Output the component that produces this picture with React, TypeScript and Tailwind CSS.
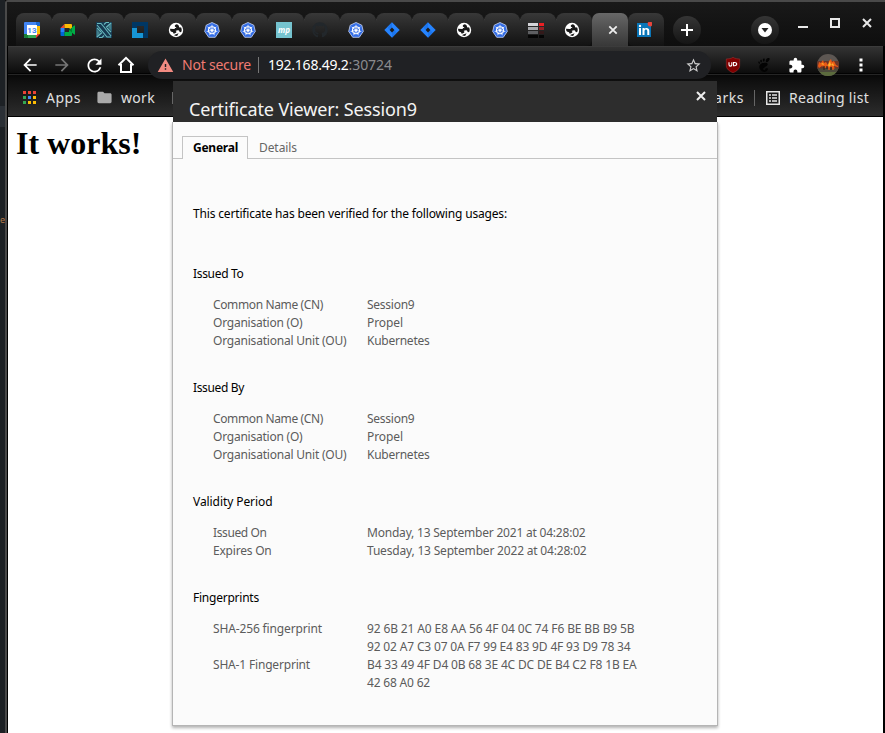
import { useLayoutEffect, useRef, type ReactNode } from "react";
import { MdArrowBack, MdArrowForward, MdClose, MdExtension, MdFolder, MdRefresh, MdStarBorder, MdWarning } from "react-icons/md";
import { FaGithub } from "react-icons/fa";
import { SiGnome } from "react-icons/si";

/** Tracks a single line of text so that it occupies `width` pixels. */
function Fit({ width, className = "", children }: { width: number; className?: string; children: string }) {
  const ref = useRef<HTMLSpanElement>(null);
  useLayoutEffect(() => {
    const el = ref.current;
    if (!el) return;
    el.style.letterSpacing = "0px";
    const natural = el.getBoundingClientRect().width;
    el.style.letterSpacing = `${(width - natural) / children.length}px`;
  }, [width, children]);
  return (
    <span ref={ref} className={`inline-block whitespace-nowrap ${className}`}>
      {children}
    </span>
  );
}

function CalendarIcon() {
  return (
    <svg width="16" height="16" viewBox="0 0 16 16">
      <path d="M0 1q0-1 1-1h11v16H1q-1 0-1-1z" fill="#4285f4" />
      <path d="M12 0h3q1 0 1 1v3h-4z" fill="#1967d2" />
      <path d="M12 4h4v8h-4z" fill="#fbbc04" />
      <path d="M4 12h8v4H4z" fill="#34a853" />
      <path d="M0 12h4v4H1q-1 0-1-1z" fill="#188038" />
      <path d="M12 12h4l-4 4z" fill="#ea4335" />
      <path d="M3 3h10v10H3z" fill="#fff" />
      <text x="7.900" y="11" textAnchor="middle" fontSize="8" fontWeight="700" fontFamily="Roboto, sans-serif" fill="#4285f4">13</text>
    </svg>
  );
}

function MeetIcon() {
  return (
    <svg width="16" height="16" viewBox="0 0 16 16">
      <path d="M.5 6l4-4v4z" fill="#ea4335" />
      <path d="M4.500 2H11q1 0 1 1v5l-3-2H4.500z" fill="#fbbc04" />
      <path d="M.5 6h4v4h-4z" fill="#2684fc" />
      <path d="M.5 10h4v4h-3q-1 0-1-1z" fill="#0066da" />
      <path d="M4.500 10H9V8h3v5q0 1-1 1H4.500z" fill="#00ac47" />
      <path d="M9 8l5-4.200q1-.8 1 .4v7.600q0 1.200-1 .4z" fill="#00832d" />
      <path d="M12 5.500l2-1.700q1-.8 1 .4v7.600q0 1.200-1 .4l-2-1.700z" fill="#00ac47" />
    </svg>
  );
}

function NIcon() {
  return (
    <svg width="16" height="16" viewBox="0 0 16 16">
      <rect width="16" height="16" fill="#173a52" />
      <path d="M.5 15.500V7l3.500 4zM15.500.500V9L12 5z" fill="#68b9bd" opacity=".55" />
      <path d="M1 1.500h4l3 3.500 7 9M1 3l10 12h4M1 6l4 4M11 6l4 4" fill="none" stroke="#68b9bd" strokeWidth="1.100" />
      <path d="M1 15l5-4.500M15 1l-5 4.500M3 15.500h3l2-2M10 .5h3M8 2.500l2-2" fill="none" stroke="#68b9bd" strokeWidth="1.100" />
    </svg>
  );
}

function LinuxFoundationIcon() {
  return (
    <svg width="16" height="16" viewBox="0 0 16 16">
      <path d="M0 0h16v16h-5v-5h1V4H5v5H0z" fill="#003764" />
      <path d="M0 6h5v5h6v5H0z" fill="#1795d4" />
      <path d="M0 0h5v6H0z" fill="#003764" />
    </svg>
  );
}

function GlobeIcon() {
  return (
    <svg width="16" height="16" viewBox="0 0 16 16">
      <circle cx="8" cy="8" r="7.200" fill="#fff" />
      <path d="M9 2.300c-1.500.2-2.400 1-2.200 2 .2.900 1.300.7 1.500 1.500.2.900-1.200 1.100-2.500 1.100l-3.700-.1c-.2 2.500 1 3 2.200 3.200 1.200.3 1 1.500 1.600 1.700l2-.9c.9-.4.500-1.500-.4-1.800 1-.5 2.300-1 3.300-.6 1 .4.300 1.700 1.400 1.900l1.200-.5c.5-1.500.5-3-.4-4.600-1.200.8-1.900.2-2-.8-.1-1-.8-1.200-2-2.100z" fill="#181818" />
      <path d="M6.300 13.600c.4-1.200 1.400-1.300 2.500-1.500l1.800-.9-1.500 2.700z" fill="#181818" />
    </svg>
  );
}

function KubernetesIcon() {
  return (
    <svg width="16" height="16" viewBox="0 0 16 16">
      <path d="M8 .5l5.800 2.700 1.500 6.200-4 5.900H4.700l-4-5.900 1.500-6.200z" fill="#326ce5" stroke="#cbd8f8" strokeWidth=".8" strokeLinejoin="round" />
      <circle cx="8" cy="8.300" r="3.500" fill="none" stroke="#fff" strokeWidth="1.100" />
      <path d="M8 8.300V2.800M8 8.300L3.700 4.900M8 8.300l4.300-3.400M8 8.300l-5.300 1.200M8 8.300l5.300 1.200M8 8.300l-2.400 4.900M8 8.300l2.400 4.900" stroke="#fff" strokeWidth=".8" />
      <circle cx="8" cy="8.300" r="1" fill="#fff" />
    </svg>
  );
}

function JiraIcon() {
  return (
    <svg width="16" height="16" viewBox="0 0 16 16">
      <path d="M8 .3L15.700 8 8 15.700.3 8z" fill="#2684ff" />
      <path d="M8 .3v5.300L5.600 8 3.500 5.500zM8 15.700v-5.300L10.400 8l2.100 2.500z" fill="#1268e0" opacity=".5" />
      <path d="M8 5.600L10.400 8 8 10.400 5.600 8z" fill="#1c1c1c" />
    </svg>
  );
}

function MpIcon() {
  return (
    <svg width="16" height="16" viewBox="0 0 16 16">
      <rect width="16" height="16" fill="#75c3cf" />
      <text x="8" y="10.500" textAnchor="middle" fontSize="8" fontWeight="700" fontStyle="italic" fontFamily="Open Sans, sans-serif" fill="#fff">mp</text>
    </svg>
  );
}

function StripesIcon() {
  return (
    <svg width="16" height="16" viewBox="0 0 16 16">
      <path d="M0 1h10v3H0z" fill="#d4d4d8" />
      <path d="M11 1h5v3h-5z" fill="#ed2024" />
      <path d="M0 5h10v3H0z" fill="#a8a9ad" />
      <path d="M11 5h5v3h-5z" fill="#982024" />
      <path d="M0 9h10v3H0z" fill="#5e5f62" />
      <path d="M11 9h5v3h-5z" fill="#33191a" />
      <path d="M0 13h10v3H0zM11 13h5v3h-5z" fill="#050505" />
    </svg>
  );
}

function LinkedInIcon() {
  return (
    <svg width="16" height="16" viewBox="0 0 16 16">
      <rect x="1" y="1" width="14" height="14" fill="#0a76b8" />
      <path d="M3 6h2v7H3zM6.500 6h2v1c1-1.600 4.800-1.700 4.800 1.700V13h-2V9.200c0-2.200-2.800-2-2.800 0V13h-2z" fill="#fff" />
      <circle cx="4" cy="3.900" r="1.200" fill="#fff" />
      <circle cx="14" cy="2" r="2.400" fill="#e8453c" />
    </svg>
  );
}

function HomeIcon() {
  return (
    <svg width="18" height="18" viewBox="0 0 18 18">
      <path d="M1.500 9.200L9 1.800l7.500 7.400M4 8v8h10V8" fill="none" stroke="#fff" strokeWidth="2" />
    </svg>
  );
}

function ShieldIcon() {
  return (
    <svg width="16" height="16" viewBox="0 0 16 16">
      <path d="M8 .3c2 1.300 4.200 1.600 6.700 1.600v6.500c0 3.500-3 5.800-6.700 7.400-3.700-1.600-6.700-3.900-6.700-7.400V1.900C3.800 1.900 6 1.600 8 .3z" fill="#800000" stroke="#a44" strokeWidth=".4" />
      <path d="M4 5.300v2.500q0 1.300 1.400 1.300T6.800 7.800V5.300" fill="none" stroke="#fff" strokeWidth="1.100" />
      <path d="M8.500 5.500h1q2.200 0 2.200 1.600T9.500 8.700h-1z" fill="none" stroke="#fff" strokeWidth="1.100" />
    </svg>
  );
}

function AvatarIcon() {
  return (
    <svg width="22" height="22" viewBox="0 0 22 22">
      <defs>
        <clipPath id="avatar"><circle cx="11" cy="11" r="11" /></clipPath>
      </defs>
      <g clipPath="url(#avatar)">
        <path d="M0 0h22v22H0z" fill="#5d5753" />
        <path d="M0 7h22v8H0z" fill="#6b3528" />
        <path d="M1 12l1-4 2 1 2-3 1 3 2-1 2 3 1-4 2-2 1 3 2-1 2 4 2 1v1l-4-1 1 4h-2l-2-4-1 3-2-2-3 1-3-2-3 2z" fill="#e85a16" />
        <path d="M4 10l2-1 1 2zM11 11l2-4 1 4 2-2 1 3-3-1-2 2z" fill="#ffb52c" />
        <path d="M0 14.500h22V22H0z" fill="#4c4a3c" />
        <path d="M2 18h18v4H2z" fill="#5b6b3d" />
        <path d="M12 13v3M16 12v4" stroke="#e85a16" strokeWidth="1.400" />
        <path d="M7 12v4M10 12v3M14 13v3" stroke="#30231b" strokeWidth="1.200" />
      </g>
    </svg>
  );
}

function ListIcon() {
  return (
    <svg width="14" height="14" viewBox="0 0 14 14">
      <rect x=".75" y=".75" width="12.500" height="12.500" fill="none" stroke="#e6e6e6" strokeWidth="1.500" />
      <path d="M3 4h2M6 4h5M3 7h2M6 7h5M3 10h2M6 10h5" stroke="#e6e6e6" strokeWidth="1.500" />
    </svg>
  );
}

function CloseIcon({ className = "" }: { className?: string }) {
  return (
    <svg className={className} width="10" height="10" viewBox="0 0 10 10">
      <path d="M1 1l8 8M9 1L1 9" stroke="#eee" strokeWidth="2" />
    </svg>
  );
}

const tabIcons: ReactNode[] = [
  <CalendarIcon />, <MeetIcon />, <NIcon />, <LinuxFoundationIcon />, <GlobeIcon />, <KubernetesIcon />,
  <KubernetesIcon />, <MpIcon />, <FaGithub size={16} color="#22272b" />, <KubernetesIcon />, <JiraIcon />,
  <JiraIcon />, <GlobeIcon />, <KubernetesIcon />, <StripesIcon />, <GlobeIcon />,
];

const appColors = [
  "bg-[#ea4335]", "bg-[#ea4335]", "bg-[#ea4335]",
  "bg-[#34a853]", "bg-[#4285f4]", "bg-[#fbbc04]",
  "bg-[#34a853]", "bg-[#fbbc04]", "bg-[#fbbc04]",
];

function TabStrip() {
  return (
    <div className="flex h-11 shrink-0 bg-gradient-to-b from-[#191919] to-[#0e0e0e] pl-[9px]">
      <div className="mt-[11px] flex h-[33px]">
        {tabIcons.map((icon, i) => (
          <div key={i} className={`flex w-9 rounded-t-[8px] bg-gradient-to-b from-[#383838] to-[#121212] pt-[9px] pl-2 ${i === 15 ? "rounded-br-[6px]" : ""}`}>
            <span className="h-4 w-4">{icon}</span>
            {i < 15 && <span className="-mt-[3px] -mr-px ml-[12px] h-[22px] w-px bg-[#555]" />}
          </div>
        ))}
        <div className="flex w-9 items-center justify-center rounded-t-[7px] bg-gradient-to-b from-[#686868] to-[#383838] pl-[6px]">
          <svg width="10" height="10" viewBox="0 0 10 10"><path d="M1.300 1.300l7.400 7.400M8.700 1.300L1.300 8.700" stroke="#eee" strokeWidth="1.800" /></svg>
        </div>
        <div className="w-9 rounded-t-[8px] rounded-bl-[6px] bg-gradient-to-b from-[#383838] to-[#121212] pt-[9px] pl-2">
          <LinkedInIcon />
        </div>
      </div>
      <div className="mt-[14px] ml-[9px] flex h-7 w-7 items-center justify-center rounded-full bg-gradient-to-b from-[#353535] to-[#151515]">
        <svg width="12" height="12" viewBox="0 0 12 12"><path d="M6 0v12M0 6h12" stroke="#fff" strokeWidth="2" /></svg>
      </div>
      <div className="mt-[14px] ml-[50px] flex h-7 w-7 items-center justify-center rounded-full bg-gradient-to-b from-[#353535] to-[#151515]">
        <svg width="14" height="14" viewBox="0 0 14 14"><circle cx="7" cy="7" r="7" fill="#fff" /><path d="M3.500 5h7L7 9.500z" fill="#222" /></svg>
      </div>
      <svg className="mt-4 ml-[19px]" width="76" height="12" viewBox="0 0 76 12">
        <path d="M0 9h10" stroke="#e8e8e8" strokeWidth="2" />
        <path d="M33 1h8v8h-8z" fill="none" stroke="#e8e8e8" strokeWidth="2" />
        <path d="M65 1l8 8M73 1l-8 8" stroke="#e8e8e8" strokeWidth="2" />
      </svg>
    </div>
  );
}

function Toolbar() {
  return (
    <div className="flex h-9 shrink-0 bg-[linear-gradient(to_bottom,#444_0,#333_1px,#0c0c0c_27px,#020202_27px,#020202_28px,#252525_28px,#252525_29px,#080808_29px,#101010_36px)] text-[14px]">
      <div className="flex w-[140px] items-center gap-[14px] pt-[2px] pl-[13px]">
        <span className="flex w-[18px] items-center justify-center"><MdArrowBack className="shrink-0" size={20} color="#fff" /></span>
        <span className="flex w-[18px] items-center justify-center"><MdArrowForward className="shrink-0" size={20} color="#757575" /></span>
        <span className="flex w-[18px] items-center justify-center"><MdRefresh className="shrink-0" size={21} color="#fff" /></span>
        <HomeIcon />
      </div>
      <div className="mt-[5px] flex h-7 w-[563px] items-center rounded-full bg-[#202124] pl-[9px]">
        <MdWarning size={17} color="#f28b82" />
        <Fit width={69} className="-mt-[2px] ml-[8px] text-[#f07b72]">Not secure</Fit>
        <span className="ml-[7px] mr-[9px] h-4 w-px bg-[#777]" />
        <Fit width={80.5} className="-mt-[2px] text-white">192.168.49.2</Fit>
        <Fit width={43.5} className="-mt-[2px] text-[#8b8b8e]">:30724</Fit>
        <MdStarBorder className="ml-auto mr-[9px]" size={17} color="#ccc" />
      </div>
      <div className="flex grow items-center pt-[2px] pl-[14px]">
        <ShieldIcon />
        <SiGnome className="ml-[16px]" size={14} color="#030303" />
        <MdExtension className="ml-[17px]" size={17} color="#fff" />
        <span className="ml-[12px]"><AvatarIcon /></span>
        <svg className="ml-[20px]" width="4" height="14" viewBox="0 0 4 14"><path d="M.5.500h3v3h-3zM.5 5.500h3v3h-3zM.5 10.500h3v3h-3z" fill="#fff" /></svg>
      </div>
    </div>
  );
}

function BookmarksBar() {
  return (
    <div className="flex h-[35px] shrink-0 items-center border-b border-black bg-gradient-to-b from-[#101010] to-[#2d2d2d] pb-[3px] text-[14px] text-[#e0e0e0]">
      <div className="ml-[15px] grid grid-cols-3 gap-[2px]">
        {appColors.map((color, i) => <span key={i} className={`h-[3px] w-[3px] ${color}`} />)}
      </div>
      <Fit width={35} className="ml-[10px]">Apps</Fit>
      <MdFolder className="ml-[15px]" size={17} color="#aaa" />
      <Fit width={34} className="ml-[8px]">work</Fit>
      <span className="ml-[17px] h-3 w-4 bg-[#666]" />
      <div className="ml-auto flex items-center pr-[14px]">
        <Fit width={30}>arks</Fit>
        <span className="mr-[11px] ml-[10px] h-4 w-px bg-[#666]" />
        <ListIcon />
        <Fit width={80} className="ml-[9px]">Reading list</Fit>
      </div>
    </div>
  );
}

type Line = [text: string, width: number];
type Section = { title: Line; rows: { label: Line; values: Line[] }[] };

const subject: Section["rows"] = [
  { label: ["Common Name (CN)", 110], values: [["Session9", 47.5]] },
  { label: ["Organisation (O)", 89.5], values: [["Propel", 36]] },
  { label: ["Organisational Unit (OU)", 133.5], values: [["Kubernetes", 62.5]] },
];

const sections: Section[] = [
  { title: ["Issued To", 50.5], rows: subject },
  { title: ["Issued By", 51], rows: subject },
  {
    title: ["Validity Period", 79.5],
    rows: [
      { label: ["Issued On", 53.5], values: [["Monday, 13 September 2021 at 04:28:02", 218.5]] },
      { label: ["Expires On", 58.5], values: [["Tuesday, 13 September 2022 at 04:28:02", 219.5]] },
    ],
  },
  {
    title: ["Fingerprints", 66],
    rows: [
      {
        label: ["SHA-256 fingerprint", 109],
        values: [["92 6B 21 A0 E8 AA 56 4F 04 0C 74 F6 BE BB B9 5B", 267.5], ["92 02 A7 C3 07 0A F7 99 E4 83 9D 4F 93 D9 78 34", 263.5]],
      },
      {
        label: ["SHA-1 Fingerprint", 97],
        values: [["B4 33 49 4F D4 0B 68 3E 4C DC DE B4 C2 F8 1B EA", 269.5], ["42 68 A0 62", 63]],
      },
    ],
  },
];

function CertificateDialog() {
  return (
    <div className="absolute top-[81px] left-[172px] flex h-[645px] w-[546px] flex-col text-[12px] leading-[18px] text-[#5c5c5c]">
      <div className="mx-px flex h-[41px] shrink-0 justify-between bg-[#2d2d2d] pr-[11px] pl-4">
        <Fit width={228} className="mt-[16px] text-[18px] leading-[24px] text-[#f4f4f4]">Certificate Viewer: Session9</Fit>
        <CloseIcon className="mt-[10px]" />
      </div>
      <div className="flex grow flex-col border border-t-0 border-[#b5b5b5] bg-[#fbfbfb] shadow-[0_2px_3px_rgba(0,0,0,0.3)]">
        <div className="mt-[14px] flex h-[23px] shrink-0 items-end">
          <span className="h-px w-[9px] bg-[#c4c4c4]" />
          <div className="h-[23px] w-[66px] border border-b-0 border-[#c4c4c4] pt-[2px] pl-[10px]">
            <Fit width={45} className="font-bold text-black">General</Fit>
          </div>
          <div className="h-[23px] grow border-b border-[#c4c4c4] pt-[3px] pl-[11px]">
            <Fit width={38} className="text-[#666]">Details</Fit>
          </div>
        </div>
        <div className="flex flex-col items-start pt-[46px] pl-5">
          <Fit width={314} className="text-black">This certificate has been verified for the following usages:</Fit>
          <div className="mt-[42px] flex flex-col gap-[29px]">
            {sections.map((section) => (
              <div key={section.title[0]}>
                <Fit width={section.title[1]} className="block w-fit text-black">{section.title[0]}</Fit>
                <div className="mt-[13px] pl-5">
                  {section.rows.map((row) => (
                    <div key={row.label[0]} className="flex">
                      <div className="w-[154px] shrink-0">
                        <Fit width={row.label[1]} className="align-top">{row.label[0]}</Fit>
                      </div>
                      <div className="flex flex-col items-start">
                        {row.values.map(([text, width]) => <Fit key={text} width={width}>{text}</Fit>)}
                      </div>
                    </div>
                  ))}
                </div>
              </div>
            ))}
          </div>
        </div>
      </div>
    </div>
  );
}

export default function App() {
  return (
    <div className="relative flex h-[733px] w-[885px] overflow-hidden bg-black font-['Noto_Sans','Open_Sans',sans-serif]">
      <div className="flex w-[5px] shrink-0 flex-col overflow-hidden bg-[#1d2125]">
        <div className="mt-[106px] h-[21px] bg-[#2b3036]" />
        <span className="mt-[87px] text-[9px] leading-[12px] text-[#b67b4b]">e</span>
      </div>
      <div className="flex w-[880px] shrink-0 flex-col rounded-tl-[3px] border-t-2 border-l-2 border-[#494949] bg-black">
        <TabStrip />
        <div className="mr-[2px] flex grow flex-col pl-px">
          <Toolbar />
          <BookmarksBar />
          <main className="grow bg-white px-2 pt-2 font-['Liberation_Serif','Times_New_Roman',serif]">
            <h1 className="text-[32px] leading-[37px] font-bold text-black">It works!</h1>
          </main>
        </div>
      </div>
      <CertificateDialog />
    </div>
  );
}
